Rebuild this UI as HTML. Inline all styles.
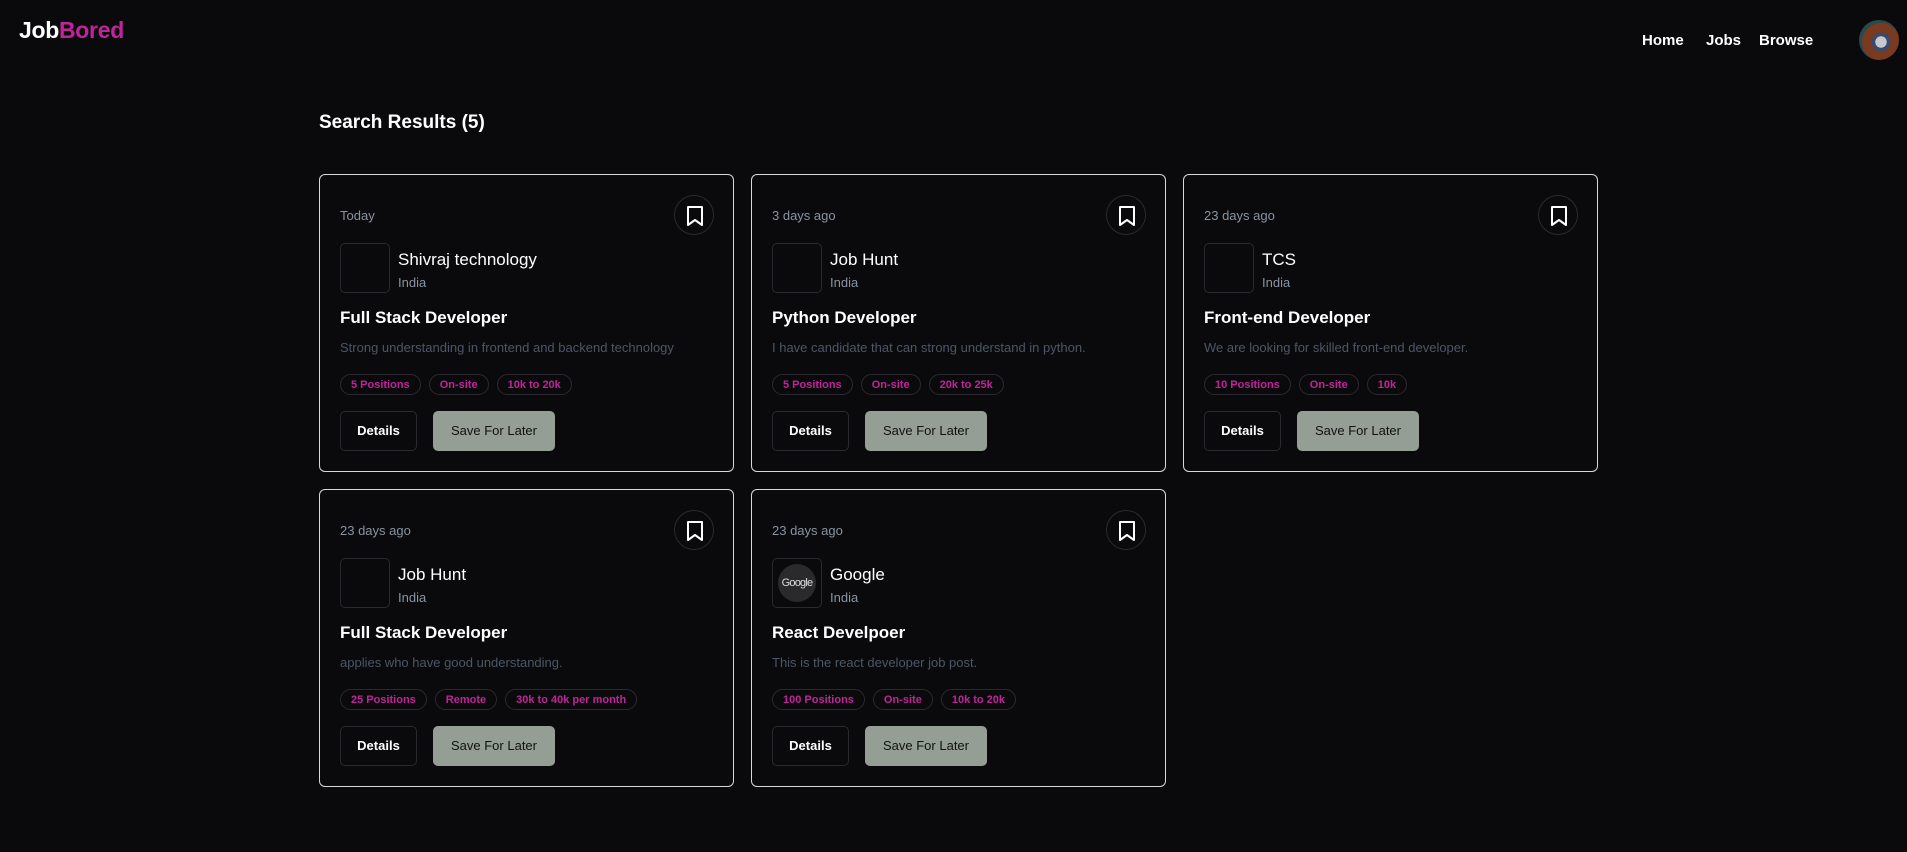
<!DOCTYPE html>
<html><head><meta charset="utf-8"><style>
*{box-sizing:border-box;margin:0;padding:0}
body{width:1907px;height:852px;background:#0a0a0c;font-family:"Liberation Sans",sans-serif;color:#fff;position:relative;overflow:hidden}
.logo{position:absolute;left:19px;top:17px;font-size:23px;font-weight:bold;letter-spacing:-0.3px}
.logo span{color:#c0249a}
.nav{position:absolute;top:32px;font-size:15px;font-weight:bold}
.av{position:absolute;left:1859px;top:20px;width:40px;height:40px;border-radius:50%;background:radial-gradient(circle at 55% 55%,#c8c8d0 0 18%,#3a4a6a 19% 30%,#7a3a20 31% 60%,#2a4a50 61%)}
h2{position:absolute;left:319px;top:112px;font-size:19px;font-weight:bold}
.card{position:absolute;width:415px;height:298px;border:1px solid #d8d8d8;border-radius:6px}
.date{position:absolute;left:20px;top:33px;font-size:13px;color:#8a93a3}
.bm{position:absolute;left:354px;top:20px;width:40px;height:40px;border:1px solid #2a2a2e;border-radius:50%}
.bm svg{position:absolute;left:11px;top:9px}
.lg{position:absolute;left:20px;top:68px;width:50px;height:50px;border:1px solid #2a2a2e;border-radius:5px;overflow:hidden}
.cn{position:absolute;left:78px;top:75px;font-size:17px}
.loc{position:absolute;left:78px;top:100px;font-size:13px;color:#8a93a3}
.tt{position:absolute;left:20px;top:133px;font-size:17px;font-weight:bold}
.ds{position:absolute;left:20px;top:165px;font-size:13px;color:#4d5666}
.bd{position:absolute;left:20px;top:199px;display:flex;gap:8px}
.bd span{border:1px solid #2a2a2e;border-radius:11px;height:21px;line-height:21px;padding:0 10px;font-size:11px;font-weight:bold;color:#c0249a}
.b1{position:absolute;left:20px;top:236px;width:77px;height:40px;border:1px solid #2a2a2e;border-radius:5px;font-size:13px;font-weight:bold;text-align:center;line-height:38px}
.b2{position:absolute;left:113px;top:236px;width:122px;height:40px;background:#959e94;border-radius:5px;font-size:13px;color:#111;text-align:center;line-height:40px}
</style></head><body>
<div class="logo">Job<span>Bored</span></div>
<div class="nav" style="left:1642px">Home</div>
<div class="nav" style="left:1706px">Jobs</div>
<div class="nav" style="left:1759px">Browse</div>
<div class="av"></div>
<h2>Search Results (5)</h2>

<div class="card" style="left:319px;top:174px">
<div class="date">Today</div><div class="bm"><svg width="18" height="22" viewBox="0 0 18 22"><path d="M2 2h14v18l-7-5-7 5z" fill="none" stroke="#fff" stroke-width="2" stroke-linejoin="round"/></svg></div>
<div class="lg"></div><div class="cn">Shivraj technology</div><div class="loc">India</div>
<div class="tt">Full Stack Developer</div><div class="ds">Strong understanding in frontend and backend technology</div>
<div class="bd"><span>5 Positions</span><span>On-site</span><span>10k to 20k</span></div>
<div class="b1">Details</div><div class="b2">Save For Later</div></div>

<div class="card" style="left:751px;top:174px">
<div class="date">3 days ago</div><div class="bm"><svg width="18" height="22" viewBox="0 0 18 22"><path d="M2 2h14v18l-7-5-7 5z" fill="none" stroke="#fff" stroke-width="2" stroke-linejoin="round"/></svg></div>
<div class="lg"></div><div class="cn">Job Hunt</div><div class="loc">India</div>
<div class="tt">Python Developer</div><div class="ds">I have candidate that can strong understand in python.</div>
<div class="bd"><span>5 Positions</span><span>On-site</span><span>20k to 25k</span></div>
<div class="b1">Details</div><div class="b2">Save For Later</div></div>

<div class="card" style="left:1183px;top:174px">
<div class="date">23 days ago</div><div class="bm"><svg width="18" height="22" viewBox="0 0 18 22"><path d="M2 2h14v18l-7-5-7 5z" fill="none" stroke="#fff" stroke-width="2" stroke-linejoin="round"/></svg></div>
<div class="lg"></div><div class="cn">TCS</div><div class="loc">India</div>
<div class="tt">Front-end Developer</div><div class="ds">We are looking for skilled front-end developer.</div>
<div class="bd"><span>10 Positions</span><span>On-site</span><span>10k</span></div>
<div class="b1">Details</div><div class="b2">Save For Later</div></div>

<div class="card" style="left:319px;top:489px">
<div class="date">23 days ago</div><div class="bm"><svg width="18" height="22" viewBox="0 0 18 22"><path d="M2 2h14v18l-7-5-7 5z" fill="none" stroke="#fff" stroke-width="2" stroke-linejoin="round"/></svg></div>
<div class="lg"></div><div class="cn">Job Hunt</div><div class="loc">India</div>
<div class="tt">Full Stack Developer</div><div class="ds">applies who have good understanding.</div>
<div class="bd"><span>25 Positions</span><span>Remote</span><span>30k to 40k per month</span></div>
<div class="b1">Details</div><div class="b2">Save For Later</div></div>

<div class="card" style="left:751px;top:489px">
<div class="date">23 days ago</div><div class="bm"><svg width="18" height="22" viewBox="0 0 18 22"><path d="M2 2h14v18l-7-5-7 5z" fill="none" stroke="#fff" stroke-width="2" stroke-linejoin="round"/></svg></div>
<div class="lg"><div style="position:absolute;left:5px;top:5px;width:38px;height:38px;border-radius:50%;background:#2a2a2c;color:#ddd;font-size:11px;line-height:38px;text-align:center;letter-spacing:-0.8px">Google</div></div><div class="cn">Google</div><div class="loc">India</div>
<div class="tt">React Develpoer</div><div class="ds">This is the react developer job post.</div>
<div class="bd"><span>100 Positions</span><span>On-site</span><span>10k to 20k</span></div>
<div class="b1">Details</div><div class="b2">Save For Later</div></div>
</body></html>
